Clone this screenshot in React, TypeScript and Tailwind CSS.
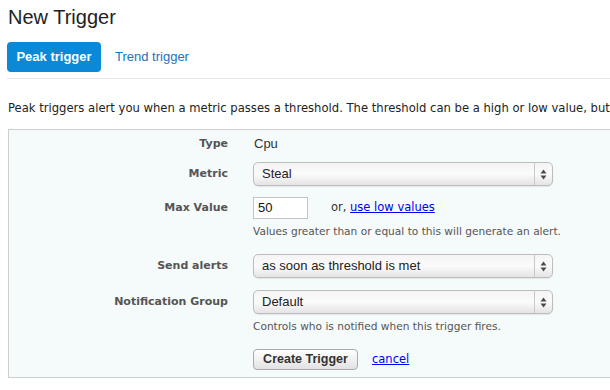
import React from "react";

const lucida = { fontFamily: '"DejaVu Sans", sans-serif' };
const helv = { fontFamily: '"Liberation Sans", Arial, sans-serif' };

function Arrows() {
  return (
    <svg width="7" height="11" viewBox="0 0 7 11" className="block">
      <polygon points="0.5,4.5 6.5,4.5 3.5,0.5" fill="#4a4a4a" />
      <polygon points="0.5,6.5 6.5,6.5 3.5,10.5" fill="#4a4a4a" />
    </svg>
  );
}

function Select({ value }: { value: string }) {
  return (
    <div
      className="flex h-[24px] w-[300px] items-stretch rounded-[5px] border border-[#bdbdbd] bg-gradient-to-b from-[#f4f4f4] via-[#fbfbfb] to-[#e4e4e4] shadow-[0_1px_1px_rgba(0,0,0,0.08)]"
      style={helv}
    >
      <div className="flex flex-1 items-center pl-[8px] text-[13px] text-[#222]">{value}</div>
      <div className="flex w-[18px] items-center justify-center border-l border-[#c8c8c8]">
        <Arrows />
      </div>
    </div>
  );
}

function Label({ children }: { children: React.ReactNode }) {
  return (
    <div
      className="w-[219px] shrink-0 text-right text-[11px] font-bold text-[#555]"
      style={lucida}
    >
      {children}
    </div>
  );
}

export default function App() {
  return (
    <div className="relative h-[390px] w-[610px] overflow-hidden bg-white">
      <div className="pl-[8px] pt-[5px]">
        <div className="h-[24px] text-[20px] leading-[24px] text-[#222]" style={helv}>
          New Trigger
        </div>
      </div>
      <div className="ml-[7px] mt-[13px] flex items-center">
        <div
          className="flex h-[30px] w-[94px] items-center justify-center rounded-[4px] bg-[#0b88d6] text-[13px] font-bold text-white"
          style={helv}
        >
          Peak trigger
        </div>
        <div className="ml-[14px] text-[13px] text-[#1b71c2]" style={helv}>
          Trend trigger
        </div>
      </div>
      <div className="ml-[7px] mt-[6px] h-px bg-[#e6e6e6]" />
      <div
        className="ml-[8px] mt-[22px] whitespace-nowrap text-[11.6px] leading-[14px] text-[#222]"
        style={lucida}
      >
        Peak triggers alert you when a metric passes a threshold. The threshold can be a high or low value, but
      </div>
      <div className="ml-[8px] mt-[14px] h-[249px] w-[620px] border border-[#cfcfcf] bg-[#f5fafb] pt-[4px]">
        <div className="flex h-[20px] items-center">
          <Label>Type</Label>
          <div className="ml-[26px] text-[13px] text-[#333]" style={helv}>
            Cpu
          </div>
        </div>
        <div className="mt-[8px] flex items-center">
          <Label>Metric</Label>
          <div className="ml-[25px]">
            <Select value="Steal" />
          </div>
        </div>
        <div className="mt-[11px] flex items-center">
          <Label>Max Value</Label>
          <div
            className="ml-[25px] flex h-[22px] w-[55px] items-center border border-[#c4c4c4] bg-white pl-[4px] text-[13px] text-[#111]"
            style={helv}
          >
            50
          </div>
          <div className="ml-[23px] text-[11.5px] text-[#333]" style={lucida}>
            or, <span className="text-[#0000ee] underline">use low values</span>
          </div>
        </div>
        <div className="mt-[5px] flex">
          <div className="w-[219px] shrink-0" />
          <div className="ml-[25px] text-[10.6px] leading-[14px] text-[#555]" style={lucida}>
            Values greater than or equal to this will generate an alert.
          </div>
        </div>
        <div className="mt-[16px] flex items-center">
          <Label>Send alerts</Label>
          <div className="ml-[25px]">
            <Select value="as soon as threshold is met" />
          </div>
        </div>
        <div className="mt-[12px] flex items-center">
          <Label>Notification Group</Label>
          <div className="ml-[25px]">
            <Select value="Default" />
          </div>
        </div>
        <div className="mt-[5px] flex">
          <div className="w-[219px] shrink-0" />
          <div className="ml-[25px] text-[10.6px] leading-[14px] text-[#555]" style={lucida}>
            Controls who is notified when this trigger fires.
          </div>
        </div>
        <div className="mt-[16px] flex items-center">
          <div className="w-[219px] shrink-0" />
          <div
            className="ml-[25px] flex h-[21px] w-[105px] items-center justify-center rounded-[4px] border border-[#aaa] bg-gradient-to-b from-[#ffffff] to-[#e2e2e2] text-[12.5px] font-bold text-[#333]"
            style={helv}
          >
            Create Trigger
          </div>
          <div className="ml-[14px] text-[11.5px] text-[#0000ee] underline" style={lucida}>
            cancel
          </div>
        </div>
      </div>
    </div>
  );
}
